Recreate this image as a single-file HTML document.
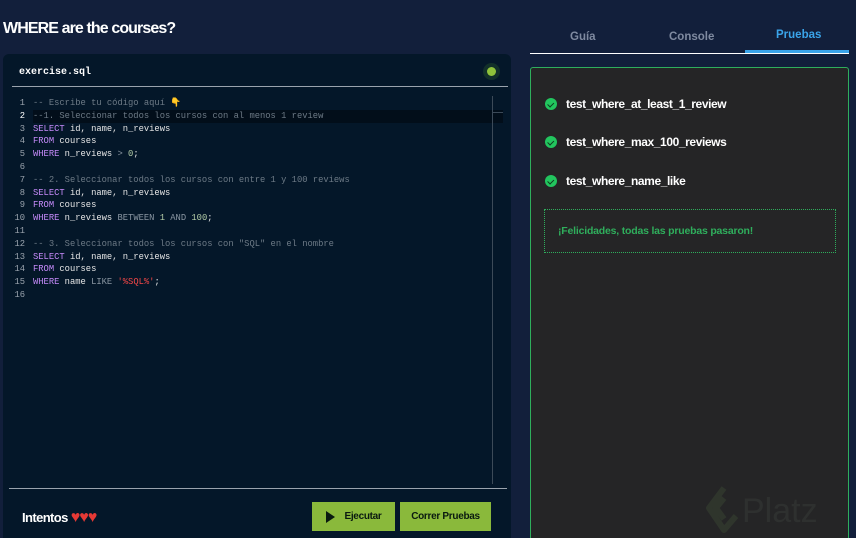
<!DOCTYPE html>
<html><head><meta charset="utf-8"><style>
*{margin:0;padding:0;box-sizing:border-box}
html,body{width:856px;height:538px;overflow:hidden}
body{background:#121f3b;font-family:"Liberation Sans",sans-serif;position:relative}
h1{position:absolute;left:3px;top:20px;font-size:16px;color:#fff;font-weight:bold;letter-spacing:-0.9px}
.ed{position:absolute;left:3px;top:54px;width:508px;height:484px;background:#041729;border-radius:6px 6px 0 0}
.fn{position:absolute;left:16px;top:13px;font:bold 10px "Liberation Mono",monospace;color:#fff}
.dot{position:absolute;left:480px;top:9px;width:17px;height:17px;border-radius:50%;background:#12302a}
.dot i{position:absolute;left:4px;top:4px;width:9px;height:9px;border-radius:50%;background:#8fc23b}
.sep{position:absolute;left:9px;top:32px;width:496px;height:1px;background:#9aa3ad}
.code{position:absolute;left:0;top:43px;font:8.8px/12.8px "Liberation Mono",monospace;color:#e6e6e6;white-space:pre}
.ln{display:inline-block;width:22px;text-align:right;color:#9aa3ad;margin-right:8px}
.hl{position:absolute;left:30px;top:56px;width:470px;height:13px;background:#020e1a}
.c{color:#6d7a86}.k{color:#c58af9}.n{color:#b5cea8}.s{color:#f44747}.o{color:#8a96a2}
.sb{position:absolute;left:489px;top:42px;width:1px;height:388px;background:#3c4a58}
.sb2{position:absolute;left:489px;top:58px;width:11px;height:1px;background:#3c4a58}
.sep2{position:absolute;left:6px;top:434px;width:498px;height:1px;background:#9aa3ad}
.int{position:absolute;left:19px;top:455px;color:#fff;font-size:13px;font-weight:bold;letter-spacing:-0.6px}
.int span{color:#e53935;font-size:16px;letter-spacing:-1px}
.btn{position:absolute;top:448px;height:29px;background:#8ab93b;color:#0a1a10;font-size:10px;font-weight:bold;display:flex;align-items:center;justify-content:center;letter-spacing:-0.3px}
.tabs{position:absolute;left:530px;top:29px;width:319px;height:25px;border-bottom:1px solid #fff}
.tab{position:absolute;top:0;font-size:11.5px;font-weight:bold;color:#7f8aa0}
.act{position:absolute;left:215px;top:21px;width:104px;height:3px;background:#3aa4ea}
.rp{position:absolute;left:530px;top:67px;width:319px;height:480px;background:#252526;border:1px solid #2fae5c;border-radius:3px}
.t{position:absolute;left:14px;font-size:12px;font-weight:bold;color:#fff;letter-spacing:-0.4px;display:flex;align-items:center}
.t b{display:inline-block;width:12px;height:12px;border-radius:50%;background:#22c55e;margin-right:9px;position:relative}
.t b:after{content:"";position:absolute;left:4px;top:2.5px;width:2.5px;height:4.5px;border:solid #0d3b1e;border-width:0 1.5px 1.5px 0;transform:rotate(45deg)}
.fel{position:absolute;left:13px;top:141px;width:292px;height:44px;border:1px dotted #2fae5c;color:#2fae5c;font-size:10.5px;font-weight:bold;padding:15px 0 0 13px;letter-spacing:-0.2px}
.pl{position:absolute;left:704px;top:484px;width:140px;height:54px}
</style></head><body>
<h1>WHERE are the courses?</h1>
<div class="ed">
<div class="fn">exercise.sql</div>
<div class="dot"><i></i></div>
<div class="sep"></div>
<div class="hl"></div>
<div class="code"><span class="ln">1</span><span class="c">-- Escribe tu código aquí </span><span style="color:#f2b53c">👇</span>
<span class="ln" style="color:#fff">2</span><span class="c">--1. Seleccionar todos los cursos con al menos 1 review</span>
<span class="ln">3</span><span class="k">SELECT</span> id, name, n_reviews
<span class="ln">4</span><span class="k">FROM</span> courses
<span class="ln">5</span><span class="k">WHERE</span> n_reviews <span class="o">&gt;</span> <span class="n">0</span>;
<span class="ln">6</span>
<span class="ln">7</span><span class="c">-- 2. Seleccionar todos los cursos con entre 1 y 100 reviews</span>
<span class="ln">8</span><span class="k">SELECT</span> id, name, n_reviews
<span class="ln">9</span><span class="k">FROM</span> courses
<span class="ln">10</span><span class="k">WHERE</span> n_reviews <span class="o">BETWEEN</span> <span class="n">1</span> <span class="o">AND</span> <span class="n">100</span>;
<span class="ln">11</span>
<span class="ln">12</span><span class="c">-- 3. Seleccionar todos los cursos con "SQL" en el nombre</span>
<span class="ln">13</span><span class="k">SELECT</span> id, name, n_reviews
<span class="ln">14</span><span class="k">FROM</span> courses
<span class="ln">15</span><span class="k">WHERE</span> name <span class="o">LIKE</span> <span class="s">'%SQL%'</span>;
<span class="ln">16</span></div>
<div class="sb"></div><div class="sb2"></div>
<div class="sep2"></div>
<div class="int">Intentos <span>♥♥♥</span></div>
<div class="btn" style="left:309px;width:83px"><svg width="10" height="12" style="margin-right:9px"><path d="M1 0L10 6L1 12Z" fill="#0a1a10"/></svg>Ejecutar</div>
<div class="btn" style="left:397px;width:91px">Correr Pruebas</div>
</div>
<div class="tabs">
<div class="tab" style="left:40px;top:2px">Guía</div>
<div class="tab" style="left:139px;top:2px">Console</div>
<div class="tab" style="left:246px;color:#3aa4ea">Pruebas</div>
<div class="act"></div>
</div>
<div class="rp">
<div class="t" style="top:29px"><b></b>test_where_at_least_1_review</div>
<div class="t" style="top:67px"><b></b>test_where_max_100_reviews</div>
<div class="t" style="top:106px"><b></b>test_where_name_like</div>
<div class="fel">¡Felicidades, todas las pruebas pasaron!</div>
</div>
<div class="pl"><svg width="40" height="54" style="position:absolute;left:0;top:0"><path d="M20 4L5 24L20 46L32 32M20 14L12 24L20 35" fill="none" stroke="#2f352c" stroke-width="6" stroke-linejoin="round"/></svg><span style="position:absolute;left:38px;top:8px;font-size:34px;color:#2e302f">Platz</span></div>
</body></html>
